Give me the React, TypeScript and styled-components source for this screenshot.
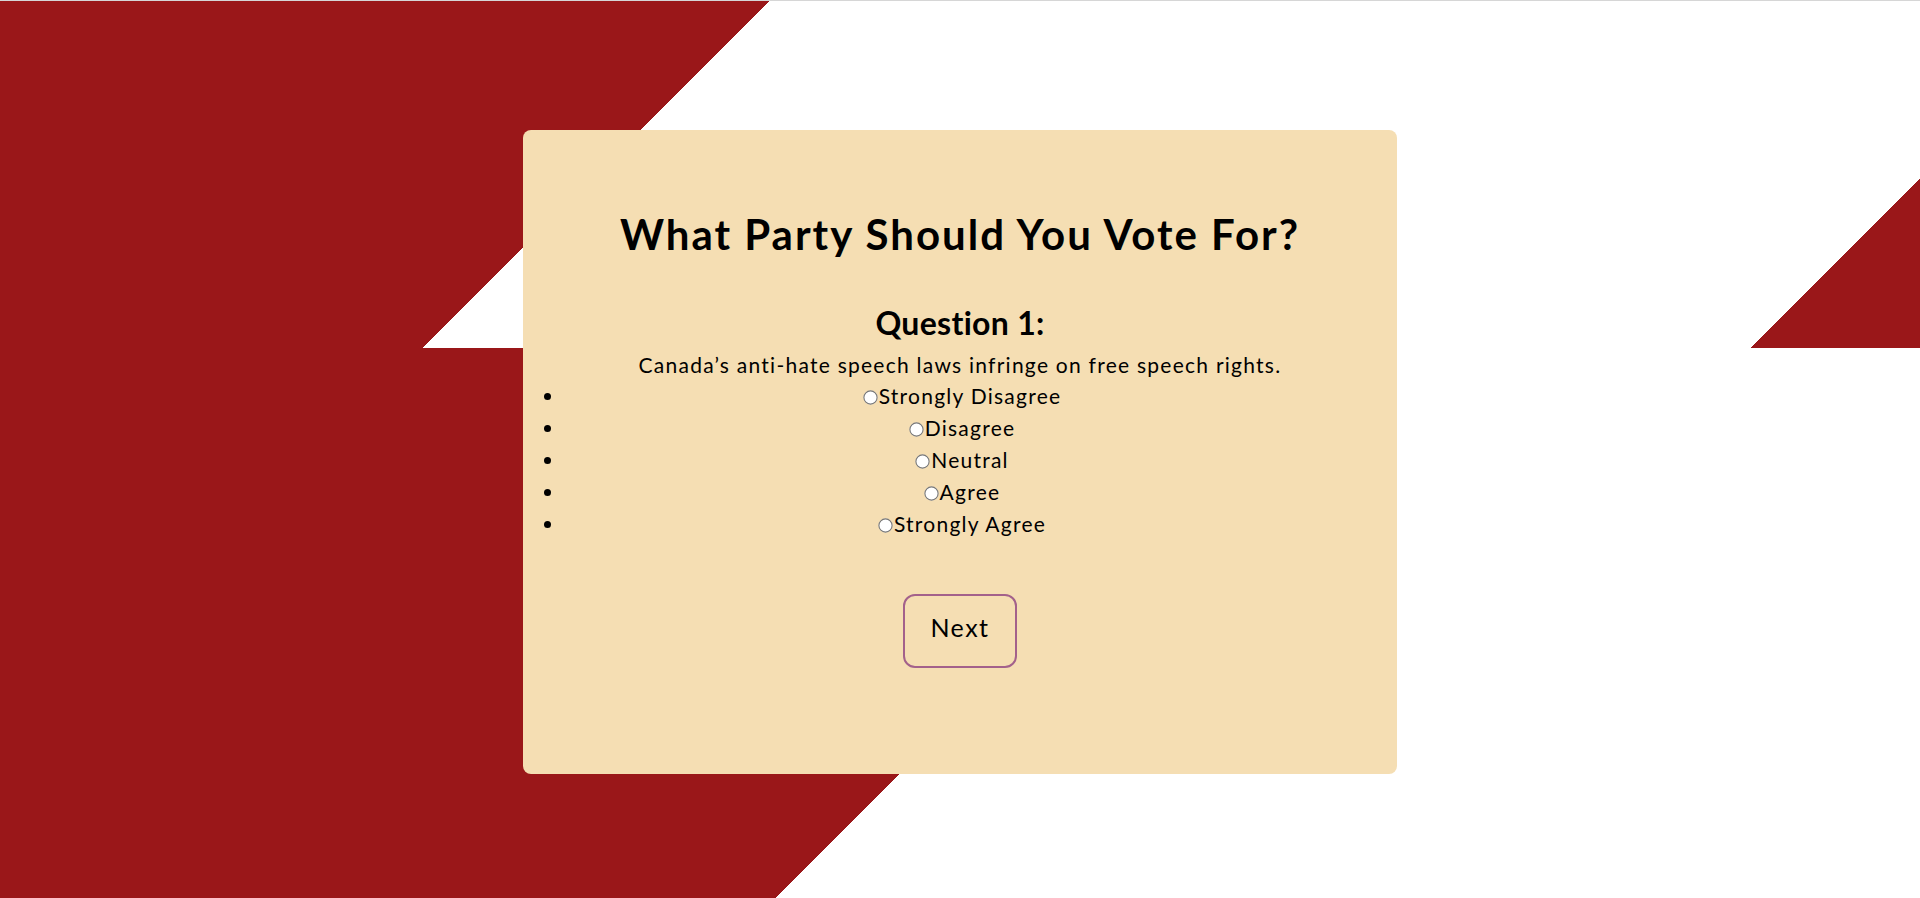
import React, { useState } from 'react';
import styled, { createGlobalStyle } from 'styled-components';

const RED = '#9a1719';

const GlobalStyle = createGlobalStyle`
  html, body {
    margin: 0;
    padding: 0;
    overflow: hidden;
  }
  body {
    font-family: 'Lato', 'Liberation Sans', sans-serif;
    color: #000;
  }
`;

const Page = styled.div`
  box-sizing: border-box;
  width: 100vw;
  height: 100vh;
  border-top: 1px solid #d6d6d6;
  display: flex;
  justify-content: center;
  align-items: flex-start;
  padding-top: 129px;
  background-color: #ffffff;
  background-image:
    linear-gradient(135deg, ${RED} 0 544px, transparent 544px 1483px, ${RED} 1483px),
    linear-gradient(135deg, ${RED} 0 937.6px, transparent 937.6px);
  background-size: 100% 347px, 100% 550px;
  background-position: 0 0, 0 347px;
  background-repeat: no-repeat;
`;

const Card = styled.div`
  box-sizing: border-box;
  width: 874px;
  height: 644px;
  background: #f5deb3;
  border-radius: 8px;
  display: flex;
  flex-direction: column;
  align-items: center;
  text-align: center;
  padding-top: 79px;
`;

const Title = styled.h1`
  margin: 0;
  font-size: 42px;
  line-height: 50px;
  font-weight: 700;
  letter-spacing: 2px;
`;

const QuestionLabel = styled.h2`
  margin: 45px 0 0;
  font-size: 32px;
  line-height: 38px;
  font-weight: 700;
  letter-spacing: 0.3px;
`;

const Prompt = styled.p`
  margin: 10px 0 0;
  font-size: 21px;
  line-height: 25px;
  letter-spacing: 1.25px;
`;

const Options = styled.ul`
  align-self: stretch;
  margin: 3px 0 0;
  padding: 0 42px;
  list-style: disc;
`;

const Option = styled.li`
  font-size: 21px;
  line-height: 32px;
  text-align: center;
  letter-spacing: 1.25px;
`;

const Radio = styled.input`
  width: 13px;
  height: 13px;
  margin: 3px 2px 0 5px;
  transform: scale(1.1);
`;

const NextButton = styled.button`
  box-sizing: border-box;
  margin-top: 54px;
  width: 114px;
  height: 74px;
  padding: 0 0 8px;
  border: 2px solid #a3618b;
  border-radius: 12px;
  background: transparent;
  font-family: inherit;
  font-size: 25px;
  letter-spacing: 1.5px;
  color: #000;
  cursor: pointer;
`;

const choices = ['Strongly Disagree', 'Disagree', 'Neutral', 'Agree', 'Strongly Agree'];

const App: React.FC = () => {
  const [answer, setAnswer] = useState<string | null>(null);

  return (
    <>
      <GlobalStyle />
      <Page>
        <Card>
          <Title>What Party Should You Vote For?</Title>
          <QuestionLabel>Question 1:</QuestionLabel>
          <Prompt>Canada’s anti-hate speech laws infringe on free speech rights.</Prompt>
          <Options>
            {choices.map(c => (
              <Option key={c}>
                <label>
                  <Radio
                    type="radio"
                    name="q1"
                    checked={answer === c}
                    onChange={() => setAnswer(c)}
                  />
                  {c}
                </label>
              </Option>
            ))}
          </Options>
          <NextButton>Next</NextButton>
        </Card>
      </Page>
    </>
  );
};

export default App;
